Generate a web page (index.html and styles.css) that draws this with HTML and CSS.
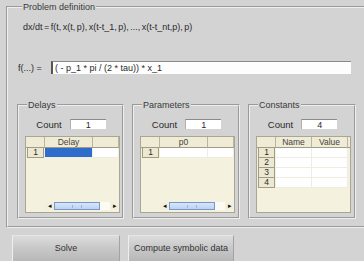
FILE: index.html
```html
<!DOCTYPE html>
<html lang="en">
<head>
  <meta charset="UTF-8">
  <title>Problem definition</title>
  <link rel="stylesheet" href="styles.css">
</head>
<body>
  <fieldset class="problem">
    <legend>Problem definition</legend>
    <div class="formula">dx/dt = f(t, x(t, p), x(t-t_1, p), ..., x(t-t_nt,p), p)</div>
    <div class="fn-row">
      <span class="fn-label">f(...) =</span>
      <div class="fn-input">( - p_1 * pi / (2 * tau)) * x_1</div>
    </div>

    <div class="panels">
      <fieldset class="panel">
        <legend>Delays</legend>
        <div class="count-row"><span>Count</span><div class="count-box">1</div></div>
        <div class="grid g-delays">
          <div class="head"></div><div class="head">Delay</div><div class="head"></div>
          <div class="rowhead">1</div><div class="cell selected"></div><div class="cell"></div>
          <div class="hscroll">
            <div class="arrow">&#9666;</div>
            <div class="thumb"><span></span></div>
            <div class="track"></div>
            <div class="arrow">&#9656;</div>
          </div>
        </div>
      </fieldset>

      <fieldset class="panel">
        <legend>Parameters</legend>
        <div class="count-row"><span>Count</span><div class="count-box">1</div></div>
        <div class="grid g-params">
          <div class="head"></div><div class="head">p0</div><div class="head"></div>
          <div class="rowhead">1</div><div class="cell"></div><div class="cell"></div>
          <div class="hscroll">
            <div class="arrow">&#9666;</div>
            <div class="thumb"><span></span></div>
            <div class="track"></div>
            <div class="arrow">&#9656;</div>
          </div>
        </div>
      </fieldset>

      <fieldset class="panel">
        <legend>Constants</legend>
        <div class="count-row"><span>Count</span><div class="count-box">4</div></div>
        <div class="grid g-consts">
          <div class="head"></div><div class="head">Name</div><div class="head">Value</div><div class="head"></div>
          <div class="rowhead">1</div><div class="cell"></div><div class="cell"></div><div class="blank"></div>
          <div class="rowhead">2</div><div class="cell"></div><div class="cell"></div><div class="blank"></div>
          <div class="rowhead">3</div><div class="cell"></div><div class="cell"></div><div class="blank"></div>
          <div class="rowhead">4</div><div class="cell"></div><div class="cell"></div><div class="blank"></div>
        </div>
      </fieldset>
    </div>
  </fieldset>

  <div class="buttons">
    <button class="btn btn-solve">Solve</button>
    <button class="btn btn-compute">Compute symbolic data</button>
  </div>
</body>
</html>
```

FILE: styles.css
```css
html {
  overflow: hidden;
}

body {
  margin: 0;
  width: 364px;
  height: 261px;
  overflow: hidden;
  background: #d3d3d3;
  font-family: "Liberation Sans", Arial, sans-serif;
  font-size: 9px;
  color: #2a2a2a;
}

legend {
  padding: 0 1px;
  line-height: 10px;
  height: 10px;
  color: #3a3a3a;
}

/* outer group, open on the right side */
.problem {
  margin: 2px 0 0 6px;
  padding: 10px 0 7px 9px;
  width: 358px;
  box-sizing: border-box;
  border: 2px groove #eeeeee;
  border-right: none;
  min-width: 0;
}

.problem > legend {
  margin-left: 5px;
}

.formula {
  margin-left: 6px;
  line-height: 11px;
  height: 11px;
  word-spacing: -1px;
}

.fn-row {
  display: flex;
  align-items: center;
  margin-top: 28px;
  height: 13px;
}

.fn-label {
  margin-left: 1px;
  width: 33px;
}

.fn-input {
  width: 296px;
  height: 12px;
  line-height: 12px;
  background: #fdfdfd;
  border-top: 1px solid #8a8a8a;
  border-left: 2px solid #555;
  padding-left: 2px;
  white-space: nowrap;
}

/* three small groups */
.panels {
  display: flex;
  gap: 8px;
  margin-top: 26px;
}

.panel {
  margin: 0;
  width: 108px;
  height: 119px;
  box-sizing: border-box;
  padding: 9px 3px 4px 6px;
  border: 2px groove #eeeeee;
  display: flex;
  flex-direction: column;
  min-width: 0;
}

.panel:first-child {
  width: 107px;
}

.panel > legend {
  margin-left: 2px;
}

.count-row {
  display: flex;
  align-items: center;
  justify-content: center;
  gap: 8px;
  height: 10px;
  padding-right: 2px;
}

.count-row span {
  font-size: 9.5px;
}

.count-box {
  width: 35px;
  height: 9px;
  line-height: 10px;
  text-align: center;
  background: #fff;
  border-top: 1px solid #8a8a8a;
  border-left: 1px solid #b0b0b0;
}

/* tables */
.grid {
  margin-top: 7px;
  height: 77px;
  width: 95px;
  box-sizing: border-box;
  background: #f4f1df;
  border: 1px solid #a9a794;
  display: grid;
  grid-template-rows: 11px;
  grid-auto-rows: 10px;
  align-content: start;
  position: relative;
}

.g-delays,
.g-params {
  grid-template-columns: 19px 48px 1fr;
}

.g-consts {
  grid-template-columns: 19px 36px 36px 1fr;
}

.head {
  background: #efebd5;
  border-right: 1px solid #b8b5a0;
  border-bottom: 1px solid #9e9b88;
  text-align: center;
  line-height: 10px;
  font-size: 8.5px;
  color: #444;
}

.head:last-child,
.g-consts .head:nth-child(4) {
  border-right: none;
}

.rowhead {
  background: #ece8d2;
  border: 1px solid #9f9c88;
  border-top: none;
  margin-left: 1px;
  margin-right: 1px;
  line-height: 9px;
  font-size: 8.5px;
  text-align: center;
}

.cell {
  background: #fff;
  border-right: 1px solid #efece0;
  border-bottom: 1px solid #efece0;
}

.cell.selected {
  background: #2e6dcc;
}

.blank {
  background: #f4f1df;
}

.hscroll {
  position: absolute;
  left: 19px;
  right: 0;
  bottom: 2px;
  height: 8px;
  display: flex;
}

.arrow {
  width: 9px;
  font-size: 7px;
  line-height: 8px;
  text-align: center;
  color: #111;
  background: #f2efdd;
}

.thumb {
  width: 46px;
  box-sizing: border-box;
  background: linear-gradient(#d7e5fa, #bcd2f3);
  border: 1px solid #7898c6;
  display: flex;
  align-items: center;
  justify-content: center;
}

.thumb span {
  width: 8px;
  height: 3px;
  border-left: 1px solid #9db4d9;
  border-right: 1px solid #9db4d9;
}

.track {
  flex: 1;
  background: #fbfaf3;
}

/* buttons */
.buttons {
  display: flex;
  gap: 8px;
  margin: 7px 0 0 12px;
}

.btn {
  height: 30px;
  padding: 0 0 4px;
  font-family: "Liberation Sans", Arial, sans-serif;
  font-size: 9px;
  color: #333;
  border: 1px solid #a3a3a3;
  border-left-color: #eeeeee;
  border-top-color: #e4e4e4;
  background: linear-gradient(#dcdcdc, #c9c9c9 40%, #b4b4b4);
}

.btn-solve {
  width: 108px;
}

.btn-compute {
  width: 106px;
}
```
